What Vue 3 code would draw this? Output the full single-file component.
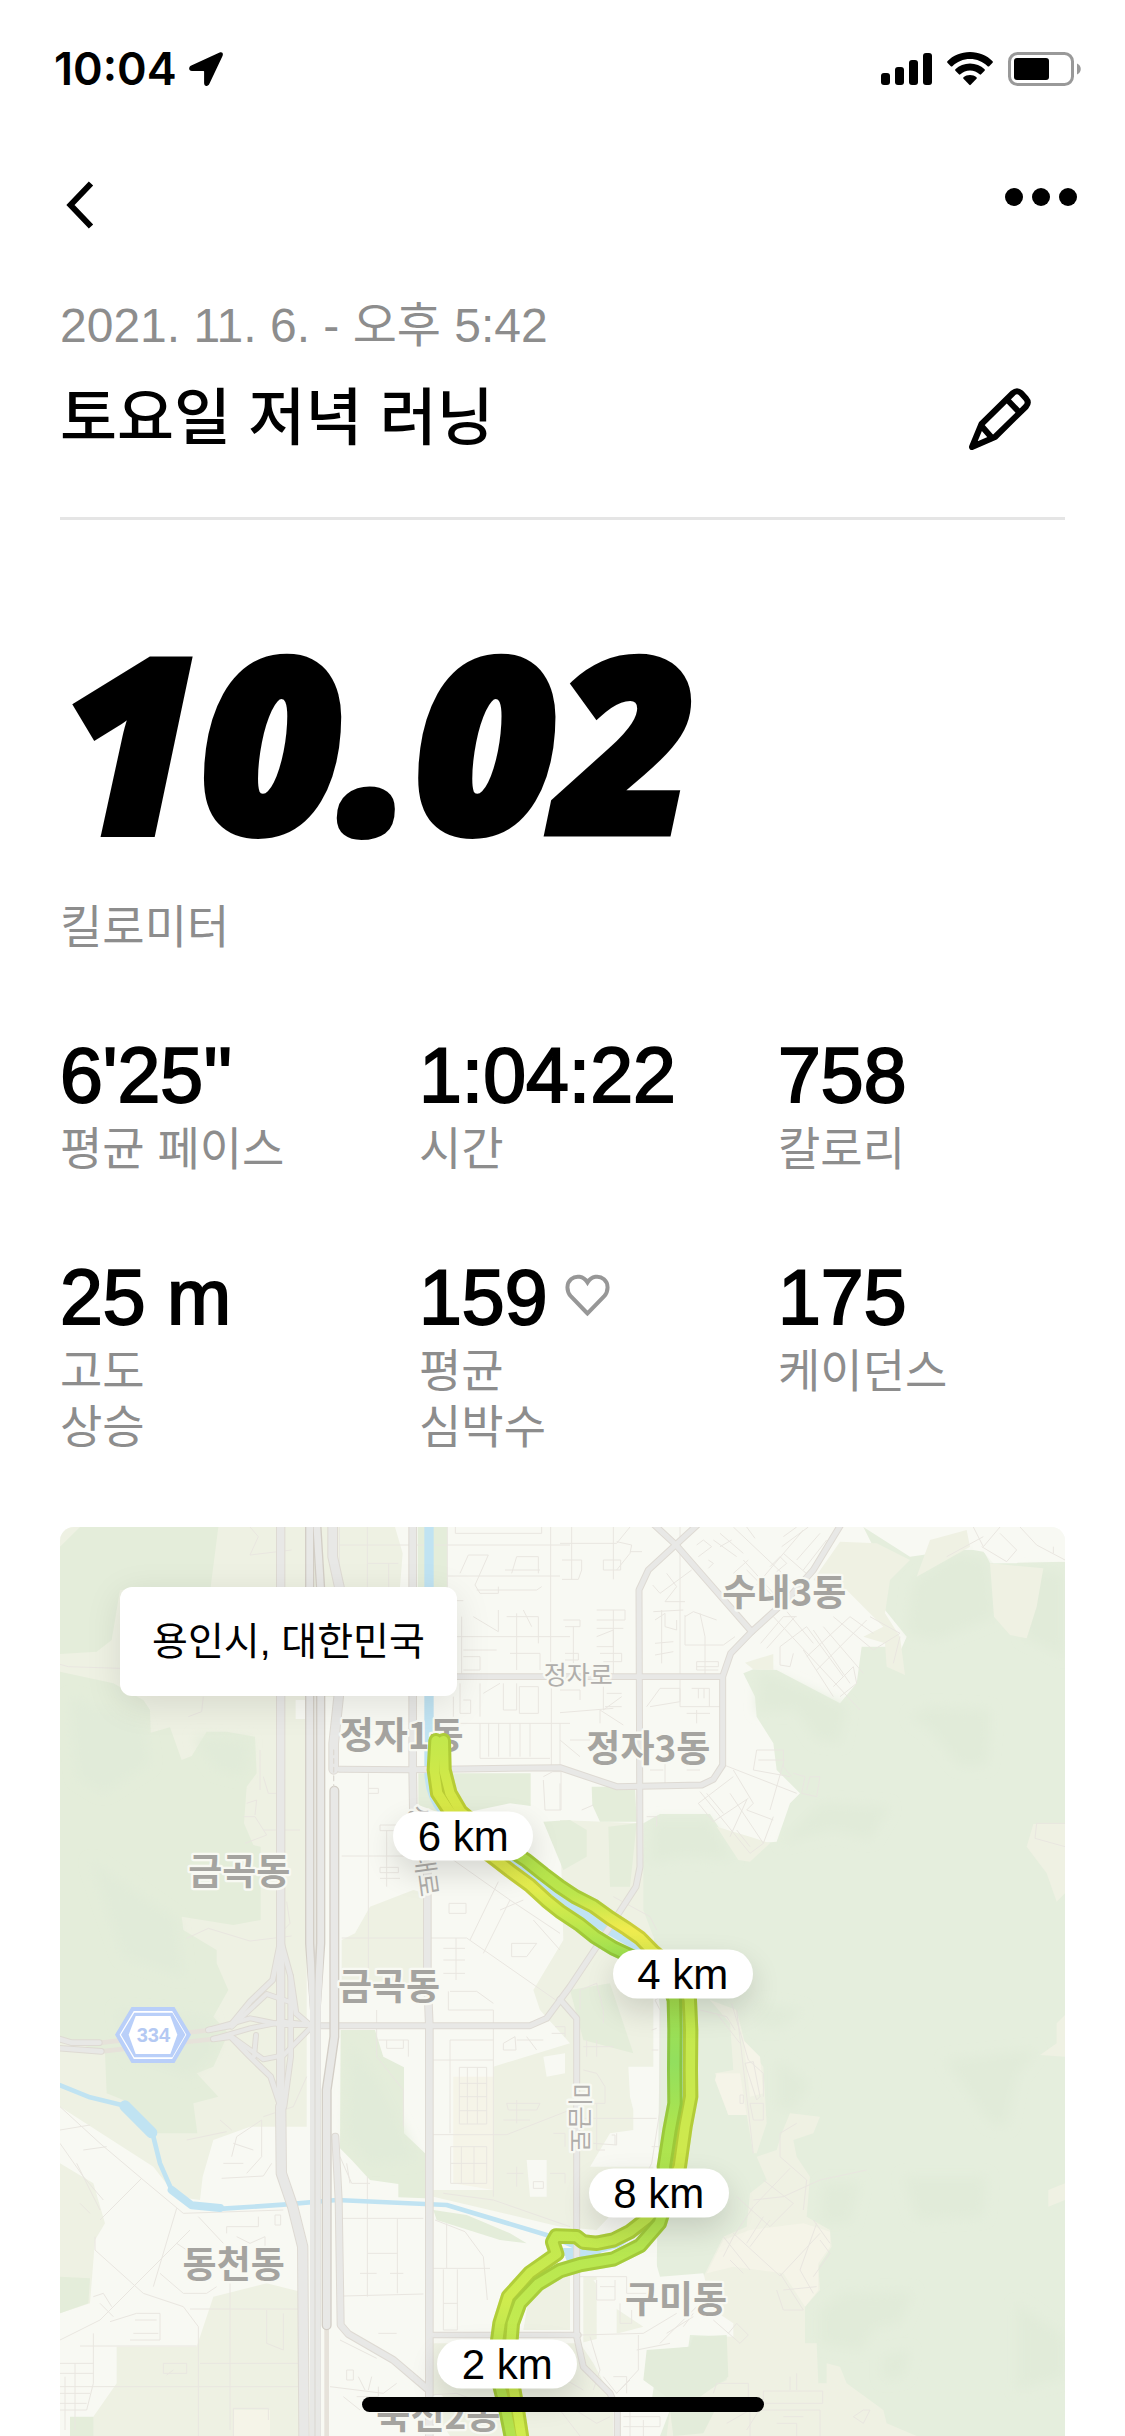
<script setup>
const stats = [
  { value: "6'25''", label: ['평균 페이스'] },
  { value: '1:04:22', label: ['시간'] },
  { value: '758', label: ['칼로리'] },
  { value: '25 m', label: ['고도', '상승'] },
  { value: '159', label: ['평균', '심박수'], heart: true },
  { value: '175', label: ['케이던스'] },
]

// Map units: the drawing's viewBox is 30 51 3015 2727
const view = { x: 30, y: 51, w: 3015, h: 2727 }
const place = (p) => ({
  left: ((p.x - view.x) / view.w) * 100 + '%',
  top: ((p.y - view.y) / view.h) * 100 + '%',
})

const pins = [
  { text: '6 km', x: 1240, y: 978 },
  { text: '4 km', x: 1898, y: 1392 },
  { text: '8 km', x: 1826, y: 2049 },
  { text: '2 km', x: 1372, y: 2562 },
]

const districts = [
  { text: '정자1동', x: 1055, y: 716 },
  { text: '수내3동', x: 2203, y: 287 },
  { text: '정자3동', x: 1795, y: 755 },
  { text: '금곡동', x: 568, y: 1125 },
  { text: '금곡동', x: 1017, y: 1471 },
  { text: '동천동', x: 551, y: 2303 },
  { text: '구미동', x: 1878, y: 2408 },
  { text: '죽전2동', x: 1165, y: 2757 },
]

const roads = [
  { d: 'M692 51V1790L694 1990L728 2090L758 2210L762 2778', w: 22 },
  { d: 'M692 1790L694 1990L728 2090L758 2210L762 2778', w: 28 },
  { d: 'M848 40V140L870 240L876 400L866 560L851 700V778', w: 26 },
  { d: 'M856 1880L866 2070L872 2445L895 2472L1030 2550L1130 2635', w: 18 },
  { d: 'M1088 40V780L1090 900L1132 1080V1400L1138 1547V2790', w: 20 },
  { d: 'M868 778L1080 779L1530 773L1700 830L1955 825L1990 808L2018 765V500L2042 430L2105 365L2210 270L2290 180L2375 40', w: 15 },
  { d: 'M1200 500H2018', w: 14 },
  { d: 'M1945 42L1795 180L1767 240L1770 1070L1758 1130L1680 1250L1560 1430L1490 1525L1440 1547H812', w: 15 },
  { d: 'M1810 42L1878 105L2105 365', w: 15 },
  { d: 'M1530 1468L1580 1525V2480L1600 2570L1680 2650L1702 2700V2790', w: 15 },
  { d: 'M1138 2475H1585', w: 14 },
  { d: 'M475 1560L540 1548L600 1475L668 1410L692 1290L722 1400L738 1510L785 1550', w: 14 },
  { d: 'M490 1587L542 1580L600 1640L662 1700L692 1790', w: 14 },
  { d: 'M475 1560L600 1525L700 1545H785', w: 12 },
  { d: 'M490 1587L600 1555L700 1535L785 1545', w: 12 },
  { d: 'M545 1550L650 1452L720 1476', w: 12 },
  { d: 'M612 1640L618 1575M545 1580L640 1648L700 1636L785 1550', w: 12 },
  { d: 'M722 1400V1640L702 1790', w: 14 },
  { d: 'M20 1585L65 1598H148M20 1614L154 1624', w: 14 },
]

const streets = [
  'M868 105H1560M868 51V231M952 51V231M952 160H1045M1016 160V231M600 51L625 80L600 135L725 120M30 463L55 470L210 475M415 620L455 605L460 560',
  'M1192 51V500M1216 51V70H1475V51M1502 51V500M1192 198H1530M1192 380H1560M1192 272H1240M1230 190L1255 135H1315L1275 225L1290 250H1345V230M1365 180H1470M1385 190L1400 140H1465V190M1280 240H1460L1475 230M1235 320V490M1270 320L1345 365V300M1240 420H1340M1240 440H1290V480H1240M1370 320H1465V400M1400 310V480M1380 430H1470V480M1420 300L1445 350',
  'M1210 560V640M1230 520V610H1262V570H1240M1290 520V620M1300 550L1350 520M1360 520V600H1400V520M1408 530H1465V610H1408ZM1220 640H1560M1290 640V745H1500M1316 640V740M1346 640V740M1380 640V740M1410 640V740M1440 640V740M1504 520V770M1530 640V770',
  'M955 790V1410M875 1038H1090M875 1284H1250L1560 1500M955 835H985V850H955M990 945H1040V962H990ZM990 1072H1045V1088H990ZM1010 960V1130M990 1105H1050M1210 1050L1380 1170L1530 1270M1345 1115L1260 1290M1380 1170L1300 1330M1197 1180H1248V1210H1197ZM1350 1200L1420 1170M1450 1230L1530 1320M1385 1300H1460L1430 1340H1385ZM1180 1315H1245M1180 1350H1245M1180 1390H1245M1218 1284V1410',
  'M630 720V840M640 800L655 850M685 670V850H655M590 880L620 870L615 915M580 920H615L650 975L585 1000M640 960H750M410 1285L475 1255L600 1293L725 1278M710 1175L720 1240L692 1270',
  'M1480 800L1508 785H1533V900H1485L1480 810',
  // north-east
  'M1530 100H1700L1740 51M1565 51V208M1536 150H1595V180L1585 208H1536M1690 51V208M1660 150H1712V180H1660ZM1700 95L1745 105L1740 130L1700 180M1740 125L1776 125',
  'M1640 300H1725V330H1640M1640 355H1720M1640 380L1690 360V410H1640M1650 430H1715V455H1660M1540 330H1590V350H1545M1570 350V500M1545 430H1585V450H1545M1690 300V500',
  'M1808 225L1830 250L1925 180M1850 190L1880 230L1845 275H1905M1810 305L1900 300M1815 330L1845 310V350L1880 360V330M1815 400L1870 395M1815 435L1870 425M1835 300V460M1905 320L1930 305L2000 330M1905 315V405H2020L2055 380M1950 310L1965 380V500M1890 51V500M1940 470H2005V455H1940V480H2005',
  'M1790 590L1830 535H1890V575L1800 590M1890 510V590H2015M1925 535H1978V590M1945 535V565M1962 535V565M1940 600V640M1910 610H1980M1660 530V600L1715 560M1670 550H1715M1665 590H1715M1650 640V600L1720 645M1530 540H1590V570M1530 608L1690 595M1530 690L1590 740M1560 690H1620M1800 780H1840M1845 750V820M1910 780H1950',
  'M1940 105L1960 90L1985 110L1945 140M1975 150L1990 160L1975 175M1990 90L2060 140M2010 70L2080 130M2010 110L2045 90M2050 51L2260 250M2090 51L2115 85M2160 170L2190 140L2210 160L2180 185M2080 150L2180 260M2050 190L2095 150M2200 80L2240 51M2195 110L2275 51M2240 150L2310 70M2260 180L2330 90M2200 130L2280 200M2120 225L2260 60M2090 180L2190 280L2290 400',
  'M2170 320L2430 600M2132 400L2200 320L2240 320M2150 415L2235 320M2190 410L2270 350L2380 500L2350 530M2190 465L2220 470L2230 430M2190 410L2190 465M2270 440L2400 320L2470 370M2300 480L2450 330M2320 350L2440 490M2290 360L2400 520M2350 320L2470 420L2550 370L2460 320M2260 420L2350 560M2370 510L2410 470L2420 520L2370 560M2550 380L2530 460',
  'M2022 765L2240 850M1945 880L2050 800M1945 880L1990 935L2095 865M1970 850L2020 910M2050 780L2110 880L2090 900L2170 930M2120 720H2200V770L2225 800M2120 720L2110 780L2220 800M2125 750H2205M2200 760L2160 900M2040 850L2140 1000L2170 920M2060 960L2100 1010M2090 870L2040 980M2230 790L2265 800L2255 850L2300 860L2310 800H2280L2270 840',
  'M1950 845L2100 1030L2140 1000M1530 820V900M1595 900L1630 885M1790 920H1820V950M1690 1160L1800 1220L1820 1260M2690 140L2800 80M2770 51L2800 110L2850 51M2795 110L2870 155L2900 120L2850 70M2910 51L2960 105L3045 150M3010 110V130M2960 940L2955 985L3045 1010M2960 940H3045',
  // south-west
  'M30 1790L150 1900L280 2010L400 2110L700 2100M30 1860L120 1845M100 1920L170 1910M30 1900L100 2000L160 2070M80 1960L150 2100M90 2080L120 2110M275 2005L150 2130M135 2180V2220L280 2350L400 2390L445 2450V2778M380 2095L310 2330M420 2160L150 2430L30 2490M445 2120L520 2200M530 2170V2150H625V2120M560 2180L600 2200L645 2180V2220M675 2115H692V2145H675Z',
  'M545 1940L560 1880L635 1830V1940L590 1990M520 1960H580M550 1900L610 1920M515 2005L640 1998L665 1960M410 1890L530 1865M510 1830L545 1860M640 1820L730 1790L770 1700M330 2290L400 2350H470L500 2330M410 2220L380 2200M540 2320V2760M420 2397H750M650 2400V2500L700 2520V2410M450 2560H760M180 2435L260 2410H330V2490H240M255 2430H320M250 2470H325M90 2508H440M130 2470V2620L110 2700',
  'M30 2630H760M30 2650H120M30 2680H110M30 2700H110M45 2600V2760M75 2560V2760M30 2560H130M30 2590H130M340 2560H410V2590H340ZM350 2595L370 2580M130 2360L160 2350L185 2390M150 2380L190 2420M550 2695H655V2730M550 2695V2778',
  'M870 2125H1120M952 2000V2360M1042 2125V2350M952 2230H1042M952 2290H980M1020 2290H1060M930 2290H952M880 2358L1120 2352M1150 2275H1320M1180 2278V2460H1222V2278M1180 2380H1222M1190 2140V2275M1155 2130L1245 2165L1300 2240L1312 2370M1180 2050L1330 2070L1560 2150M870 1940L905 2020H960M890 1960L900 2020',
  'M1150 1650H1330M1150 1874H1370L1560 1800M1330 1500V2060M1200 1590V1870M1228 1672H1310V1842H1228ZM1252 1672V1842M1282 1672V1842M1228 1720H1310M1228 1760H1310M1228 1802H1310M1200 1590H1330M1202 1910H1310V2020H1202ZM1234 1910V2020M1272 1910V2020M1202 1960H1310M1195 1444V1500H1330M1200 1444H1280L1330 1480M985 1590H1075V1640M1010 1590V1615H1060V1590M980 1500V1640L1060 1740V1850',
  'M1360 1600L1395 1580L1398 1620H1360ZM1400 1590H1480M1430 1580L1460 1620M1370 1780H1470L1460 1800H1375ZM1400 1770V1840M1360 1830H1440M1370 1990H1420M1400 1970V2030M1450 2015H1480V2035H1450ZM1505 1570H1545M1515 1550H1545V1580M1500 1990H1545V2020M1510 1870H1545V1910M1480 2570H1540L1500 2560',
  'M890 2580H910V2610H890ZM920 2660H985V2630M925 2600L945 2640M965 2600L955 2640M840 2630L1000 2650L1040 2620M880 2660L930 2700M985 2470H1040M870 2490L980 2545M1140 2655L1220 2650L1300 2680',
  // south-east
  'M1830 1500V1800L1805 1960L1790 1990M1830 1500L1815 1470L1850 1450M1580 1825H1820M1600 1610H1690M1610 1590V1640M1640 1590V1640M1590 1500V1440L1640 1420L1660 1500V1540M1805 1560L1820 1555M1805 1620H1825M1805 1910H1830M1600 1680L1640 1690L1665 1730V1780H1630M1640 1780V1920H1665M1630 1900L1700 1905V1870M1685 1875H1695V1905',
  'M2060 1500L2110 1930M2045 1480L2095 1650L2140 1690V1760M2085 1660L2110 1655L2130 1760L2120 1770L2085 1660M2100 1780H2140V1830H2110ZM2070 1755H2080V1780H2070ZM2000 1510L2070 1600M1950 1500L2030 1520L2055 1560',
  'M2190 1870L2240 1840M2190 1870V1940L2270 2010L2260 2100M2220 1975L2110 2090L2050 2180L2020 2240M2140 2010L2230 2080L2160 2150L2060 2060M2110 2070L2200 2060L2310 2010L2450 1980M2020 2180L2100 2280M2050 2170L2190 2298L2310 2170M2140 2120L2090 2200M2160 2130L2100 2210M2040 2250L2080 2290M2300 2140L2250 2280L2290 2350M2190 2290L2260 2400M2200 2340L2300 2330M2180 2340L2200 2400H2260M2310 2190L2340 2230L2290 2300M2290 2130L2340 2200',
  'M1590 2300H1730M1640 2310V2370H1695V2310M1650 2330H1695M1710 2380V2440H1745V2400M1730 2300V2350H1790M1590 2475L1780 2470L1880 2410M1765 2475V2580L1700 2650M1760 2520L1860 2500M1830 2500L1960 2370M1850 2470L1930 2420M1900 2450L1930 2410M1990 2430L2070 2500L2095 2475L2060 2440L2035 2470M1660 2600L1700 2650L1740 2610M1690 2600H1730V2650M1620 2480L1650 2580L1630 2640M1530 2600L1600 2640',
  'M1990 2650L2000 2620H2095V2700M2140 2643H2318V2680H2140ZM2090 2700H2310V2778M2200 2720H2260M2180 2740H2240V2778M2220 2600V2640M2240 2590V2640M2100 2778V2700L2030 2740M2140 2680L2090 2760M2440 2700H2460L2440 2740L2410 2720ZM1720 2720H1830V2750H1720M1740 2700V2778M1780 2730V2778M1530 2700L1590 2778M1560 2690L1640 2740L1680 2720',
]

const strandOuter =
  'M1180 692L1182 780L1200 850L1232 905L1320 980L1430 1052L1480 1092L1530 1130L1575 1160L1630 1188L1680 1224L1730 1256L1770 1284L1810 1325L1900 1400L1918 1470L1922 1560L1921 1680L1922 1760L1905 1850L1888 1970L1850 2060L1790 2126L1740 2165L1690 2190L1640 2200L1600 2196L1580 2180L1518 2178L1508 2196L1520 2232L1440 2288L1375 2360L1350 2440L1342 2500L1348 2620L1368 2700L1386 2790'
const strandInner =
  'M1158 692L1153 780L1163 850L1196 900L1290 1012L1380 1082L1440 1126L1490 1172L1530 1204L1590 1244L1635 1280L1690 1314L1750 1342L1850 1400L1873 1470L1875 1560L1874 1680L1875 1780L1860 1860L1843 1970L1850 2070L1828 2140L1770 2207L1690 2247L1590 2264L1530 2282L1464 2322L1409 2380L1387 2440L1382 2500L1388 2620L1402 2700L1416 2790'
</script>

<template>
  <main class="screen">
    <div class="status">
      <div class="clock">
        <time>10:04</time>
        <svg class="location" viewBox="0 0 34 34" aria-hidden="true">
          <path d="M30.6.5 2.3 13.6C-.9 15.2-.4 18.900 3 18.900H14.500Q15.100 18.900 15.100 19.500V31C15.100 34.700 19 35 20.400 31.800L33.400 4.200C34.700 1.300 33.200-.6 30.600.5Z" />
        </svg>
      </div>
      <div class="signals">
        <svg class="bars" viewBox="0 0 51 34" aria-hidden="true">
          <rect x="0" y="21" width="9" height="12" rx="3" />
          <rect x="14" y="15" width="9" height="18" rx="3" />
          <rect x="28" y="8" width="9" height="25" rx="3" />
          <rect x="42" y="1" width="9" height="32" rx="3" />
        </svg>
        <svg class="wifi" viewBox="0 0 46 34" aria-hidden="true">
          <path d="M23 0C14 0 6 3.500.4 9.200Q-.2 10 .4 10.700L3.800 14.200Q4.600 14.900 5.400 14.200C10 9.700 16.200 7 23 7S36 9.700 40.600 14.200Q41.400 14.900 42.200 14.200L45.600 10.700Q46.200 10 45.600 9.200C40 3.500 32 0 23 0Z" />
          <path d="M23 11.500C17.400 11.500 12.200 13.700 8.400 17.300Q7.700 18 8.400 18.700L11.900 22.300Q12.600 23 13.400 22.300C16 20 19.300 18.600 23 18.600S30 20 32.600 22.300Q33.400 23 34.100 22.300L37.600 18.700Q38.300 18 37.600 17.300C33.800 13.700 28.600 11.500 23 11.500Z" />
          <path d="M23 23C20.500 23 18.300 23.900 16.500 25.300Q15.800 26 16.500 26.800L22.300 32.800Q23 33.500 23.700 32.800L29.500 26.800Q30.200 26 29.500 25.300C27.700 23.900 25.500 23 23 23Z" />
        </svg>
        <svg class="battery" viewBox="0 0 74 34" aria-hidden="true">
          <rect x="1.500" y="1.500" width="63" height="31" rx="8" fill="none" stroke="#999" stroke-width="3" />
          <rect x="6" y="6" width="35" height="22" rx="3" />
          <path d="M69 11.500C74 13.500 74 20.500 69 22.500Z" fill="#999" />
        </svg>
      </div>
    </div>

    <nav class="nav">
      <button class="back" type="button" aria-label="뒤로">
        <svg viewBox="0 0 28 48" aria-hidden="true">
          <path d="M25 2.500 4.500 24 25 45.500" fill="none" stroke="#000" stroke-width="6" />
        </svg>
      </button>
      <button class="more" type="button" aria-label="더 보기">
        <svg viewBox="0 0 72 18" aria-hidden="true">
          <circle cx="9" cy="9" r="9" /><circle cx="36" cy="9" r="9" /><circle cx="63" cy="9" r="9" />
        </svg>
      </button>
    </nav>

    <header class="heading">
      <p class="date">2021. 11. 6. - 오후 5:42</p>
      <div class="title-row">
        <h1>토요일 저녁 러닝</h1>
        <button class="edit" type="button" aria-label="이름 편집">
          <svg viewBox="0 0 62 62" aria-hidden="true">
            <g fill="none" stroke="#000" stroke-width="6" stroke-linejoin="round">
              <path d="M3 59 12.500 36 44 5Q48 1.500 52 5L57 10.500Q60.500 14.500 57 18.500L26 49Z" />
              <path d="M38 11.500 50 24M12.500 38 23 50" />
            </g>
          </svg>
        </button>
      </div>
    </header>

    <section class="distance">
      <p class="distance-value">10.02</p>
      <p class="label">킬로미터</p>
    </section>

    <dl class="stats">
      <div v-for="s in stats" :key="s.label[0] + s.value" class="stat">
        <dd class="value">
          {{ s.value }}
          <svg v-if="s.heart" class="heart" viewBox="0 0 45 43" aria-hidden="true">
            <path d="M22.500 39.500 6 22.500C1 17 1.500 9 6 5.200 11 1 18.500 2 22.500 8.500 26.500 2 34 1 39 5.200 43.500 9 44 17 39 22.500Z" fill="none" stroke="#979797" stroke-width="4" />
          </svg>
        </dd>
        <dt class="label">
          <span v-for="line in s.label" :key="line">{{ line }}</span>
        </dt>
      </div>
    </dl>

    <section class="map" aria-label="용인시, 대한민국">
      <svg class="map-art" viewBox="30 51 3015 2727" aria-hidden="true">
        <defs>
          <linearGradient id="outer" gradientUnits="userSpaceOnUse" x1="0" y1="690" x2="0" y2="2790">
            <stop offset="0" stop-color="#c3e84c" />
            <stop offset=".1" stop-color="#dae846" />
            <stop offset=".17" stop-color="#b2e24c" />
            <stop offset=".22" stop-color="#bce64c" />
            <stop offset=".27" stop-color="#f0eb4e" />
            <stop offset=".36" stop-color="#bce64c" />
            <stop offset=".44" stop-color="#c6e94e" />
            <stop offset=".6" stop-color="#cfe94e" />
            <stop offset=".7" stop-color="#c0e84f" />
            <stop offset=".8" stop-color="#cfec4e" />
            <stop offset=".9" stop-color="#b4e24e" />
            <stop offset="1" stop-color="#b4e24e" />
          </linearGradient>
          <linearGradient id="inner" gradientUnits="userSpaceOnUse" x1="0" y1="690" x2="0" y2="2790">
            <stop offset="0" stop-color="#c3e84c" />
            <stop offset=".1" stop-color="#dae846" />
            <stop offset=".21" stop-color="#e4ec4e" />
            <stop offset=".26" stop-color="#c2e84c" />
            <stop offset=".31" stop-color="#9cdf50" />
            <stop offset=".36" stop-color="#a8e04c" />
            <stop offset=".46" stop-color="#92df5e" />
            <stop offset=".55" stop-color="#ace44f" />
            <stop offset=".7" stop-color="#b4e650" />
            <stop offset=".8" stop-color="#bfea50" />
            <stop offset="1" stop-color="#d2ec4e" />
          </linearGradient>
          <filter id="haze" x="-5%" y="-5%" width="110%" height="110%">
            <feGaussianBlur stdDeviation="18" />
          </filter>
        </defs>

        <rect x="30" y="51" width="3015" height="2727" fill="#f8f9f3" />

        <g fill="#eef1e3">
          <path d="M30 51H1035L1058 130 1050 231H870V560H770V1850H600L490 1890 458 2000 450 2070 380 2060 310 1970 30 1790Z" />
          <path d="M1090 1140 960 1190 915 1270 875 1290V1480H905V1430H1125V1150Z" />
          <path d="M1530 930 1770 940 1810 1270V1980L1640 2160 1530 2150 1150 2060V2040H1330V1670L1560 1600 1470 1500 1450 1440 1540 1290Z" />
          <path d="M30 1960 130 2020 165 2140 135 2190 120 2380 30 2410Z" />
          <path d="M200 2510H440L490 2360 650 2320 752 2345V2778H60L130 2720 200 2620Z" />
          <path d="M1150 2500H1590L1700 2530 1690 2650V2778H1200L1150 2700Z" />
          <path d="M1600 2300H1640V2500H1600ZM1700 2320H1800V2400L1850 2440 1800 2470H1700ZM1450 2280 1560 2290V2460H1420Z" />
        </g>
        <g fill="#f8f9f3">
          <path d="M737 570H768V627H737Z" />
          <path d="M1735 1670H1822L1812 1970H1620L1680 1870 1750 1860V1800L1740 1760Z" />
          <path d="M1480 1640 1545 1630V1690L1490 1700ZM1430 1950H1490V2060H1440ZM1150 1900H1200V2000H1150Z" />
        </g>

        <g fill="#e4edda">
          <path d="M30 110 90 51H505L482 231 210 240 185 390 140 425 30 432Z" />
          <path d="M30 485 190 520 280 570 300 600 302 668 360 652 395 750 425 738 470 665H530L615 680 620 790 590 830 582 940 610 1005 632 1010V1230L550 1245 395 1220 400 1260 500 1320 500 1360 535 1440 490 1520 535 1570 490 1670 440 1690 505 1760 430 1780 442 1870 310 1870 220 1770 170 1750 165 1630 30 1580Z" />
          <path d="M1103 51H1192V500H1103ZM1105 790H1442V888L1380 880 1260 905H1160L1105 885Z" />
          <path d="M1480 935 1560 930 1610 960V1040L1540 1080Z" />
          <path d="M872 1560H975L1000 1640 1062 1672V1870L1125 1930V2065L1045 2062V2022L960 2010 905 1950 870 1915Z" />
          <path d="M30 2300 120 2305 115 2380 30 2410ZM60 2720H130V2778H60Z" />
          <path d="M1625 830H1755L1760 935 1650 935 1627 885ZM1675 950 1760 940 1740 1130H1680ZM1560 1440 1680 1420 1750 1630 1600 1590Z" />
          <path d="M1150 2100 1250 2115 1380 2170 1430 2200 1350 2190 1160 2130Z" />
        </g>

        <path fill="#e5eedd" d="M2440 51 2580 140 2720 120H2800L2820 160 3045 155V2778H1790L1830 2500 1820 2300 1830 1500 1810 1280 1780 1200V940L1830 912H1980L2070 1050H2090L2120 1000 2180 995 2220 880 2250 850 2180 780 2170 700 2120 620 2115 560 2080 490 2110 478 2180 480 2370 580 2420 520 2435 410H2510L2530 470 2570 380 2505 300 2515 200Z" />

        <g filter="url(#haze)" fill="#e1ebd9">
          <path d="M2720 130 2815 150 2835 320 2660 390 2570 370 2590 215ZM2930 180 3045 190V440L2920 380Z" />
          <path d="M2130 480 2390 590 2370 700 2300 690 2240 600 2120 605Z" />
          <path d="M2640 590 2820 600V665L2810 765 2730 770 2640 660 2580 620Z" />
          <path d="M2190 1000 2310 880 2520 890 2460 990 2350 960Z" />
          <path d="M1810 930 1980 930 2050 1050 1900 1040 1800 1060Z" />
          <path d="M2685 1650 2960 1620 2900 1700 2870 1850 2820 1840ZM2560 2000H2810L2800 2120 2600 2130Z" />
          <path d="M2380 2350 2590 2345 2550 2440 2480 2450 2430 2520 2310 2500V2400ZM2900 2380 3045 2480V2600L2900 2640Z" />
          <path d="M2320 2020 2430 2020 2400 2140 2310 2140ZM2500 2540 2580 2520 2560 2600 2500 2610Z" />
          <path d="M2130 1480 2260 1500 2200 1550 2120 1550ZM2180 1650 2280 1720 2230 1800 2180 1790Z" />
          <path d="M60 560 280 640 300 760 160 850 80 800ZM430 680 600 690 580 800 500 780ZM120 1050 380 1230 400 1400 220 1340Z" />
          <path d="M200 1500 480 1520 500 1620 420 1700 240 1640ZM900 1600 980 1700 1040 1820 1100 1950 960 1960 890 1880Z" />
        </g>

        <g fill="#eff1e3">
          <path d="M2370 95 2480 100 2580 150 2520 210 2505 310 2550 380 2565 495 2510 470 2505 400 2440 380 2500 350 2390 240 2290 210Z" />
          <path d="M2820 160 2980 175 2960 290 2930 385 2880 375 2832 320ZM2640 90 2750 60 2760 110 2600 200Z" />
          <path d="M2085 458 2170 432V480L2110 478ZM2000 950 2100 980 2160 1000 2100 1055 2065 1050Z" />
          <path d="M2950 942H3045V1150L3020 1175 2990 1090 2930 1010ZM3045 1515 3020 1540V1600L2970 1635 3045 1640ZM3045 2020 2995 2040V2090L3045 2070Z" />
          <path d="M2220 1810 2310 1820 2290 1870 2230 1890 2240 1940 2280 2000 2270 2120 2340 2160 2345 2210 2305 2270 2310 2340 2265 2390V2500H2300L2305 2620H2330V2560L2370 2570 2390 2620 2500 2700 2510 2740 2600 2778H1850L1860 2700 2030 2610V2480L1960 2300 2020 2180 2090 2150 2100 2050 2150 2010 2120 1940 2180 1920 2195 1870Z" />
          <path d="M1980 1470 2060 1500 2085 1600 2140 1670 2150 1840 2120 1930H2110L2090 1815 2035 1815 1995 1690 2050 1680 2040 1540Z" />
        </g>
        <g fill="#f5f4e8">
          <path d="M2000 1690H2070L2090 1815H2035L1995 1710ZM2080 1590 2130 1640 2140 1750 2100 1760Z" />
          <path d="M2020 2190 2100 2160 2260 2140 2340 2165 2340 2210 2305 2260V2340L2265 2390 2200 2290 2050 2270 1970 2290ZM1210 1700 1330 1700V2040L1210 2020ZM550 2700H660V2778H550Z" />
        </g>
        <path fill="#f8f9f3" d="M1630 2310 1750 2300V2240L1810 2230 1830 2300 1960 2290 1990 2400 2050 2440V2480L1920 2475 1915 2510 1780 2530 1770 2650 1860 2700 1830 2778H1720L1700 2690 1630 2560 1590 2500 1780 2450 1690 2390Z" />
        <path fill="#e3ecda" d="M1790 2520 1920 2510 1930 2480 2030 2475 2035 2600 1950 2660H1850L1780 2610ZM1860 2700 2000 2690 1960 2770 1870 2778Z" />
        <path fill="#f8f9f3" d="M2760 51H3045V155L2920 140 2900 160H2830L2800 125 2770 120Z" />

        <g class="streets">
          <path v-for="d in streets" :key="d" :d="d" />
        </g>
        <path class="faint" d="M155 1598 480 1560M155 1624 490 1587M830 2450V2778" />

        <g class="water">
          <path stroke-width="28" d="M1137 51V790Q1140 860 1180 905L1260 970 1420 1090 1640 1238 1800 1330 1895 1420V1840L1860 2000 1790 2140 1700 2200 1560 2240" />
          <path stroke-width="14" d="M20 1722 120 1762 212 1784 310 1880 330 1960 365 2040 425 2088 520 2096 700 2084 860 2070 1190 2085 1500 2178 1600 2220" />
          <path stroke-width="34" d="M225 1788 305 1868" />
          <path stroke-width="24" d="M365 2040 425 2086 510 2094M1530 2226H1640" />
        </g>

        <g class="roads">
          <path v-for="r in roads" :key="'c' + r.d" :d="r.d" stroke="#dedad3" :stroke-width="r.w + 6" />
          <path v-for="r in roads" :key="'f' + r.d" :d="r.d" stroke="#e8e8e6" :stroke-width="r.w" />
          <path d="M779 40V1300L794 1500V2790" stroke="#d3cec6" stroke-width="28" />
          <path d="M800 40 812 240V1300L798 1500V2790" stroke="#d3cec6" stroke-width="28" />
          <path d="M779 40V1300L790 1500V2790" stroke="#e8e8e6" stroke-width="20" />
          <path d="M800 40 812 240V1300L802 1500V2790" stroke="#e8e8e6" stroke-width="20" />
          <path d="M795 240V2790" stroke="#d9d6d0" stroke-width="3" />
          <path d="M853 842V1580L830 1740V2446" stroke="#d3cec6" stroke-width="30" />
          <path d="M853 842V1580L830 1740V2446" stroke="#e8e8e6" stroke-width="22" />
          <path d="M851 720V830" stroke="#dedad3" stroke-width="4" stroke-dasharray="14 12" />
        </g>

        <g class="shield">
          <path d="M248 1497H370L416 1574 370 1653H248L202 1574Z" fill="#fff" stroke="#b9cff9" stroke-width="12" />
          <path d="M253 1508H367L406 1574 367 1642H253L213 1574Z" fill="#b9cff9" />
          <path d="M257 1518H361L382 1574 361 1632H257L236 1574Z" fill="#fff" />
          <text x="310" y="1595" class="route-no">334</text>
        </g>

        <text v-for="d in districts" :key="d.text + d.y" :x="d.x" :y="d.y" class="district">{{ d.text }}</text>
        <text x="1585" y="521" class="street-name">정자로</text>
        <text class="street-name" transform="translate(1562 1823) rotate(90)">미금로</text>
        <text class="street-name" transform="translate(1093 1026) rotate(82)">성남대로</text>

        <g class="track">
          <path :d="strandOuter" stroke="url(#outer)" stroke-width="46" />
          <path :d="strandOuter" class="edge" />
          <path :d="strandInner" stroke="url(#inner)" stroke-width="46" />
          <path :d="strandInner" class="edge" />
          <path :d="strandOuter" stroke="url(#outer)" stroke-width="28" />
          <path :d="strandInner" stroke="url(#inner)" stroke-width="28" />
        </g>
      </svg>

      <p class="place">용인시, 대한민국</p>
      <span v-for="p in pins" :key="p.text" class="pin" :style="place(p)">{{ p.text }}</span>
    </section>

    <div class="home-indicator"></div>
  </main>
</template>

<style>
body {
  background: #fff;
}
</style>

<style scoped>
.screen {
  min-height: 100vh;
  overflow: hidden;
  background: #fff;
  color: #000;
  font-family: 'Liberation Sans', 'Noto Sans CJK KR', sans-serif;
}

p,
h1,
dl,
dd {
  margin: 0;
}

svg {
  display: block;
}

button {
  display: flex;
  align-items: center;
  padding: 0;
  border: 0;
  background: none;
}

.status {
  display: flex;
  justify-content: space-between;
  align-items: center;
  height: 48px;
  padding: 45px 43px 0 54px;
}

.clock {
  display: flex;
  align-items: center;
  gap: 12px;
  font: 600 45px/48px Inter, sans-serif;
}

.location {
  width: 34px;
  height: 34px;
}

.signals {
  display: flex;
  gap: 15px;
}

.bars {
  width: 51px;
  height: 34px;
}

.wifi {
  width: 46px;
  height: 34px;
}

.battery {
  width: 74px;
  height: 34px;
}

.nav {
  display: flex;
  justify-content: space-between;
  align-items: flex-start;
  margin-top: 74px;
  padding: 0 48px 0 66px;
}

.back {
  height: 76px;
}

.back svg {
  width: 28px;
  height: 48px;
}

.more {
  height: 60px;
}

.more svg {
  width: 72px;
  height: 18px;
}

.heading {
  margin: 53px 60px 0;
  padding-bottom: 58px;
  border-bottom: 3px solid #e5e5e5;
}

.date {
  color: #8d8d8d;
  font-size: 48px;
  line-height: 60px;
}

.title-row {
  display: flex;
  justify-content: space-between;
  align-items: center;
  margin-top: 23px;
  padding-right: 34px;
}

h1 {
  font-size: 62px;
  font-weight: 500;
  line-height: 80px;
}

.edit svg {
  width: 62px;
  height: 62px;
}

.distance {
  margin: 129px 60px 0;
}

.distance-value {
  font-family: 'Open Sans', sans-serif;
  font-size: 242px;
  font-style: italic;
  font-weight: 800;
  line-height: 180px;
  -webkit-text-stroke: 8px #000;
}

.label {
  color: #8d8d8d;
  font-size: 46px;
  line-height: 56px;
}

.distance .label {
  margin-top: 70px;
}

.stats {
  display: grid;
  grid-template-columns: repeat(3, 1fr);
  gap: 80px 72px;
  margin: 80px 60px 0;
}

.stat {
  display: flex;
  flex-direction: column;
  gap: 6px;
}

.value {
  display: flex;
  align-items: center;
  gap: 18px;
  font-size: 77px;
  line-height: 80px;
  white-space: nowrap;
  -webkit-text-stroke: 2px #000;
}

.heart {
  width: 45px;
  height: 43px;
  margin-bottom: 4px;
}

.label span {
  display: block;
}

.map {
  position: relative;
  margin: 72px 60px 0;
  overflow: hidden;
  border-radius: 14px 14px 0 0;
}

.map-art {
  width: 100%;
  height: auto;
}

.streets path,
.faint,
.water path,
.roads path,
.track path {
  fill: none;
  stroke-linejoin: round;
}

.streets path {
  stroke: #e9e6e0;
  stroke-width: 3px;
}

.faint {
  stroke: #e6e2da;
  stroke-width: 14px;
}

.water path {
  stroke: #c0e3f2;
  stroke-linecap: round;
}

.roads path {
  stroke-linecap: round;
}

.track path {
  stroke-linecap: round;
}

.track .edge {
  stroke: #6d7a00;
  stroke-opacity: 0.26;
  stroke-width: 46px;
}

.district,
.street-name {
  fill: #a5a4a0;
  stroke: #f8f9f3;
  stroke-width: 14px;
  stroke-linejoin: round;
  paint-order: stroke;
  text-anchor: middle;
  font-family: 'Noto Sans CJK KR', sans-serif;
}

.district {
  font-size: 111px;
  font-weight: 700;
}

.street-name {
  fill: #b0aeab;
  font-size: 75px;
}

.route-no {
  fill: #b4c9f3;
  font-size: 60px;
  font-weight: 700;
  text-anchor: middle;
}

.place {
  position: absolute;
  top: 60px;
  left: 60px;
  padding: 27px 32px 26px;
  border-radius: 12px;
  background: #fff;
  box-shadow: 0 8px 36px rgba(0, 0, 0, 0.1);
  font-size: 39px;
  line-height: 56px;
}

.pin {
  position: absolute;
  width: 140px;
  border-radius: 25px;
  background: #fff;
  box-shadow: 0 12px 30px rgba(0, 0, 0, 0.14);
  font-size: 42px;
  line-height: 49px;
  text-align: center;
  transform: translate(-50%, -50%);
}

.home-indicator {
  position: fixed;
  bottom: 24px;
  left: 50%;
  width: 402px;
  height: 15px;
  border-radius: 8px;
  background: #000;
  transform: translateX(-50%);
}
</style>
